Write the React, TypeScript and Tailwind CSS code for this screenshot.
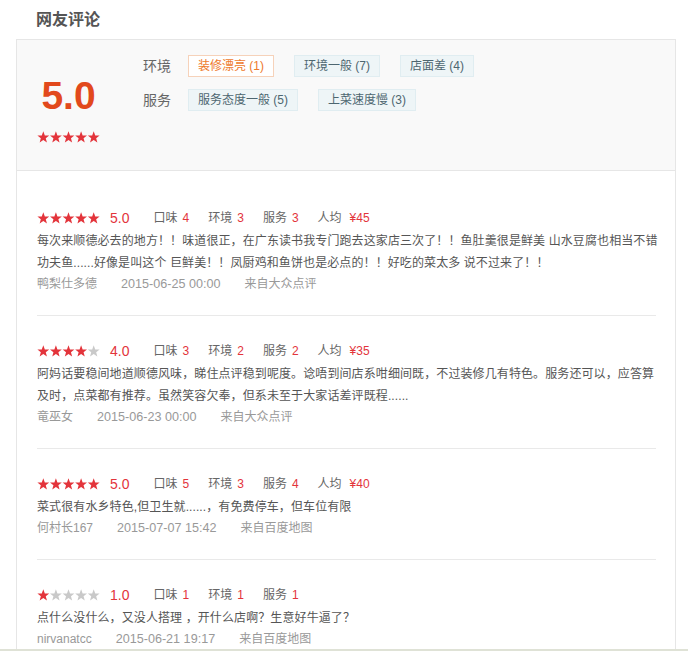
import React from "react";

type Review = {
  stars: number;
  score: string;
  taste: number;
  env: number;
  service: number;
  price?: string;
  lines: string[];
  user: string;
  date: string;
  source: string;
};

const REVIEWS: Review[] = [
  {
    stars: 5,
    score: "5.0",
    taste: 4,
    env: 3,
    service: 3,
    price: "¥45",
    lines: [
      "每次来顺德必去的地方！！味道很正，在广东读书我专门跑去这家店三次了！！鱼肚羹很是鲜美 山水豆腐也相当不错",
      "功夫鱼......好像是叫这个 巨鲜美！！凤厨鸡和鱼饼也是必点的！！好吃的菜太多 说不过来了！！",
    ],
    user: "鸭梨仕多德",
    date: "2015-06-25 00:00",
    source: "来自大众点评",
  },
  {
    stars: 4,
    score: "4.0",
    taste: 3,
    env: 2,
    service: 2,
    price: "¥35",
    lines: [
      "阿妈话要稳间地道顺德风味，睇住点评稳到呢度。谂唔到间店系咁细间既，不过装修几有特色。服务还可以，应答算",
      "及时，点菜都有推荐。虽然笑容欠奉，但系未至于大家话差评既程......",
    ],
    user: "竜巫女",
    date: "2015-06-23 00:00",
    source: "来自大众点评",
  },
  {
    stars: 5,
    score: "5.0",
    taste: 5,
    env: 3,
    service: 4,
    price: "¥40",
    lines: ["菜式很有水乡特色,但卫生就......，有免费停车，但车位有限"],
    user: "何村长167",
    date: "2015-07-07 15:42",
    source: "来自百度地图",
  },
  {
    stars: 1,
    score: "1.0",
    taste: 1,
    env: 1,
    service: 1,
    lines: ["点什么没什么，又没人搭理 ，开什么店啊？生意好牛逼了？"],
    user: "nirvanatcc",
    date: "2015-06-21 19:17",
    source: "来自百度地图",
  },
];

const STAR_POINTS =
  "6.3,0.3 7.83,4.4 12.2,4.58 8.77,7.3 9.94,11.52 6.3,9.1 2.66,11.52 3.83,7.3 0.4,4.58 4.77,4.4";

function Stars({ count }: { count: number }) {
  return (
    <svg width="63" height="12" viewBox="0 0 63 12" className="block">
      {[0, 1, 2, 3, 4].map((i) => (
        <polygon
          key={i}
          points={STAR_POINTS}
          transform={`translate(${i * 12.6} 0)`}
          fill={i < count ? "#e3343b" : "#c9c9c9"}
        />
      ))}
    </svg>
  );
}

const TAG_ROWS = [
  {
    label: "环境",
    tags: [
      { text: "装修漂亮 (1)", good: true },
      { text: "环境一般 (7)", good: false },
      { text: "店面差 (4)", good: false },
    ],
  },
  {
    label: "服务",
    tags: [
      { text: "服务态度一般 (5)", good: false },
      { text: "上菜速度慢 (3)", good: false },
    ],
  },
];

export default function App() {
  return (
    <div className="flex h-[651px] flex-col overflow-hidden bg-white font-['Liberation_Sans','Noto_Sans_CJK_SC',sans-serif] text-[#555]">
      <div className="flex-1 overflow-hidden">
        <h2 className="flex h-[39px] items-center pl-[36px] text-[16px] font-bold text-[#555]">
          网友评论
        </h2>

        <div className="ml-[16px] w-[660px] border border-[#e6e6e6]">
          {/* summary */}
          <div className="flex h-[131px] border-b border-[#e6e6e6] bg-[#f9f9f9] pl-[20px]">
            <div className="flex w-[63px] flex-col items-center pt-[36px]">
              <div className="text-[39px] font-bold leading-[40px] text-[#e2491c]">5.0</div>
              <div className="mt-[15px]">
                <Stars count={5} />
              </div>
            </div>
            <div className="ml-[43px] flex flex-col gap-[12px] pt-[15px]">
              {TAG_ROWS.map((row) => (
                <div key={row.label} className="flex items-center">
                  <span className="w-[45px] text-[14px] text-[#666]">{row.label}</span>
                  <div className="flex gap-[20px]">
                    {row.tags.map((t) => (
                      <span
                        key={t.text}
                        className={`flex h-[22px] items-center border px-[9px] text-[12px] ${
                          t.good
                            ? "border-[#f6d2ba] bg-white text-[#ee7a2c]"
                            : "border-[#e0edf1] bg-[#eef5f7] text-[#4d6670]"
                        }`}
                      >
                        {t.text}
                      </span>
                    ))}
                  </div>
                </div>
              ))}
            </div>
          </div>

          {/* reviews */}
          <div className="pl-[20px] pr-[19px]">
            {REVIEWS.map((r, i) => (
              <div
                key={r.user}
                className={`border-[#e9e9e9] pb-[21px] ${i === 0 ? "pt-[36px]" : "pt-[24px]"} ${
                  i < REVIEWS.length - 1 ? "border-b" : ""
                }`}
              >
                <div className="flex h-[22px] items-center text-[12px]">
                  <Stars count={r.stars} />
                  <span className="ml-[10px] text-[14px] text-[#e3343b]">{r.score}</span>
                  <div className="ml-[24px] flex gap-[19px] text-[#666]">
                    <span>
                      口味<span className="ml-[5px] text-[#e3343b]">{r.taste}</span>
                    </span>
                    <span>
                      环境<span className="ml-[5px] text-[#e3343b]">{r.env}</span>
                    </span>
                    <span>
                      服务<span className="ml-[5px] text-[#e3343b]">{r.service}</span>
                    </span>
                    {r.price && (
                      <span>
                        人均<span className="ml-[8px] text-[#e3343b]">{r.price}</span>
                      </span>
                    )}
                  </div>
                </div>
                <div className="mt-[1px] text-[12px] leading-[22px] tracking-[0.1px] text-[#555]">
                  {r.lines.map((l) => (
                    <div key={l} className="whitespace-pre">
                      {l}
                    </div>
                  ))}
                </div>
                <div className="flex gap-[24px] text-[12px] leading-[20px] text-[#999]">
                  <span>{r.user}</span>
                  <span className="text-[12.6px]">{r.date}</span>
                  <span>{r.source}</span>
                </div>
              </div>
            ))}
          </div>
        </div>
      </div>
      <div className="h-[2px] bg-[#dfe2d6]" />
    </div>
  );
}
